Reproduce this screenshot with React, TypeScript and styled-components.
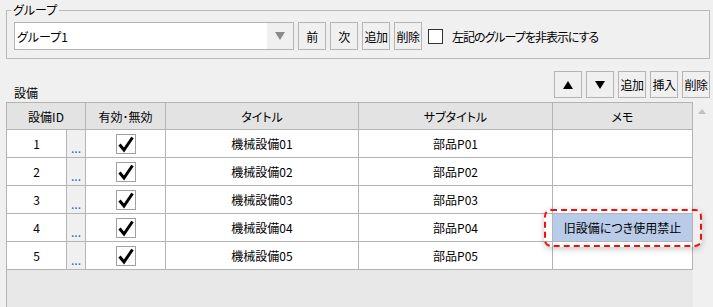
import React from 'react';
import styled, { createGlobalStyle } from 'styled-components';

const GlobalStyle = createGlobalStyle`
  html, body { margin: 0; padding: 0; }
  body {
    background: #f0f0f0;
    font-family: "Noto Sans CJK JP", "Noto Sans", sans-serif;
    font-size: 12px;
    color: #000;
    font-feature-settings: "palt";
  }
  * { box-sizing: border-box; }
`;

const Page = styled.div`
  width: 713px;
  height: 307px;
  overflow: hidden;
  display: flex;
  flex-direction: column;
`;

const GroupBox = styled.fieldset`
  margin: 0 3px 0 6px;
  padding: 2px 7px 8px 7px;
  border: 1px solid #b9b9b9;
  min-width: 0;
`;

const Legend = styled.legend`
  margin-left: -3px;
  padding: 0 2px;
  line-height: 20px;
  height: 20px;
`;

const GroupRow = styled.div`
  display: flex;
  align-items: center;
  gap: 4px;
`;

const Combo = styled.div`
  width: 280px;
  height: 28px;
  border: 1px solid #b4b4b4;
  background: #fff;
  display: flex;
  align-items: stretch;
`;

const ComboText = styled.span`
  flex: 1;
  padding-left: 2px;
  display: flex;
  align-items: center;
`;

const ComboArrow = styled.span`
  width: 26px;
  background: #f0f0f0;
  display: flex;
  align-items: center;
  justify-content: center;
  &::after {
    content: "";
    border-left: 5px solid transparent;
    border-right: 5px solid transparent;
    border-top: 8px solid #8a8a8a;
  }
`;

const Btn = styled.button<{ $h?: number }>`
  width: 28px;
  height: ${(p) => p.$h ?? 28}px;
  padding: 0;
  border: 1px solid #b4b4b4;
  background: #f0f0f0;
  font-family: inherit;
  font-size: 12px;
  color: #000;
  letter-spacing: -0.5px;
  display: flex;
  align-items: center;
  justify-content: center;
`;

const Tri = styled.span<{ $up?: boolean }>`
  width: 0;
  height: 0;
  border-left: 5px solid transparent;
  border-right: 5px solid transparent;
  ${(p) => (p.$up ? 'border-bottom: 8px solid #000;' : 'border-top: 8px solid #000;')}
`;

const CheckLabel = styled.label`
  display: flex;
  align-items: center;
  gap: 9px;
  margin-left: 2px;
  letter-spacing: -1px;
`;

const SmallBox = styled.span`
  width: 15px;
  height: 15px;
  border: 1px solid #333;
  background: #fff;
`;

const ListBar = styled.div`
  margin-top: 12px;
  padding: 0 3px 0 14px;
  display: flex;
  align-items: flex-end;
  justify-content: space-between;
`;

const ListTitle = styled.span`
  line-height: 16px;
  margin-bottom: -3px;
`;

const BtnGroup = styled.div`
  display: flex;
  gap: 4px;
`;

const TableWrap = styled.div`
  margin: 4px 0 0 6px;
  flex: 1;
  display: flex;
  min-height: 0;
`;

const GridArea = styled.div`
  width: 687px;
  border-left: 1px solid #b4b4b4;
  background: #e8e8e8;
  display: flex;
  flex-direction: column;
`;

const COLS = '60px 19px 80px 193px 194px 140px';

const HeaderRow = styled.div`
  display: grid;
  grid-template-columns: ${COLS};
  border-top: 1px solid #b4b4b4;
`;

const HeadCell = styled.div<{ $span?: number }>`
  grid-column: span ${(p) => p.$span ?? 1};
  height: 27px;
  background: #e3e3e3;
  border-right: 1px solid #b4b4b4;
  border-bottom: 1px solid #b4b4b4;
  display: flex;
  align-items: center;
  justify-content: center;
  padding-top: 1px;
`;

const Row = styled.div`
  display: grid;
  grid-template-columns: ${COLS};
`;

const Cell = styled.div<{ $bg?: string }>`
  position: relative;
  height: 28px;
  background: ${(p) => p.$bg ?? '#fff'};
  border-right: 1px solid #b4b4b4;
  border-bottom: 1px solid #b4b4b4;
  display: flex;
  align-items: center;
  justify-content: center;
`;

const Dots = styled.span`
  color: #1d5fb0;
  font-size: 12px;
  letter-spacing: 0;
  margin-top: 7px;
`;

const CheckBox = styled.span`
  width: 20px;
  height: 20px;
  border: 1px solid #a0a0a0;
  background: #fff;
  display: flex;
  align-items: center;
  justify-content: center;
`;

const Highlight = styled.div`
  position: absolute;
  top: -5px;
  bottom: -6px;
  left: -9px;
  right: -10px;
  border: 2px dashed #f01010;
  border-radius: 7px;
  box-shadow: 0 2px 6px rgba(0, 0, 0, 0.22);
  z-index: 2;
  pointer-events: none;
`;

const ScrollBar = styled.div`
  width: 17px;
  background: #f0f0f0;
  display: flex;
  justify-content: center;
  padding-top: 7px;
  &::before {
    content: "";
    width: 0;
    height: 0;
    border-left: 4px solid transparent;
    border-right: 4px solid transparent;
    border-bottom: 5px solid #c0c0c0;
  }
`;

const rows = [
  { id: 1, title: '機械設備01', sub: '部品P01', memo: '' },
  { id: 2, title: '機械設備02', sub: '部品P02', memo: '' },
  { id: 3, title: '機械設備03', sub: '部品P03', memo: '' },
  { id: 4, title: '機械設備04', sub: '部品P04', memo: '旧設備につき使用禁止' },
  { id: 5, title: '機械設備05', sub: '部品P05', memo: '' },
];

const Check = () => (
  <CheckBox>
    <svg width="18" height="18" viewBox="0 0 18 18">
      <path d="M2.5 9.5 L7 15 L15.5 2.5" fill="none" stroke="#000" strokeWidth="3" strokeLinejoin="miter" />
    </svg>
  </CheckBox>
);

export default function App() {
  return (
    <Page>
      <GlobalStyle />
      <GroupBox>
        <Legend>グループ</Legend>
        <GroupRow>
          <Combo>
            <ComboText>グループ1</ComboText>
            <ComboArrow />
          </Combo>
          <Btn>前</Btn>
          <Btn>次</Btn>
          <Btn>追加</Btn>
          <Btn>削除</Btn>
          <CheckLabel>
            <SmallBox />
            <span>左記のグループを非表示にする</span>
          </CheckLabel>
        </GroupRow>
      </GroupBox>
      <ListBar>
        <ListTitle>設備</ListTitle>
        <BtnGroup>
          <Btn $h={27}><Tri $up /></Btn>
          <Btn $h={27}><Tri /></Btn>
          <Btn $h={27}>追加</Btn>
          <Btn $h={27}>挿入</Btn>
          <Btn $h={27}>削除</Btn>
        </BtnGroup>
      </ListBar>
      <TableWrap>
        <GridArea>
          <HeaderRow>
            <HeadCell $span={2}>設備ID</HeadCell>
            <HeadCell>有効･無効</HeadCell>
            <HeadCell>タイトル</HeadCell>
            <HeadCell>サブタイトル</HeadCell>
            <HeadCell>メモ</HeadCell>
          </HeaderRow>
          {rows.map((r) => (
            <Row key={r.id}>
              <Cell>{r.id}</Cell>
              <Cell $bg="#f0f0f0"><Dots>...</Dots></Cell>
              <Cell><Check /></Cell>
              <Cell>{r.title}</Cell>
              <Cell>{r.sub}</Cell>
              <Cell $bg={r.memo ? '#b8cbe8' : '#fff'}>
                {r.memo}
                {r.memo && <Highlight />}
              </Cell>
            </Row>
          ))}
        </GridArea>
        <ScrollBar />
      </TableWrap>
    </Page>
  );
}
